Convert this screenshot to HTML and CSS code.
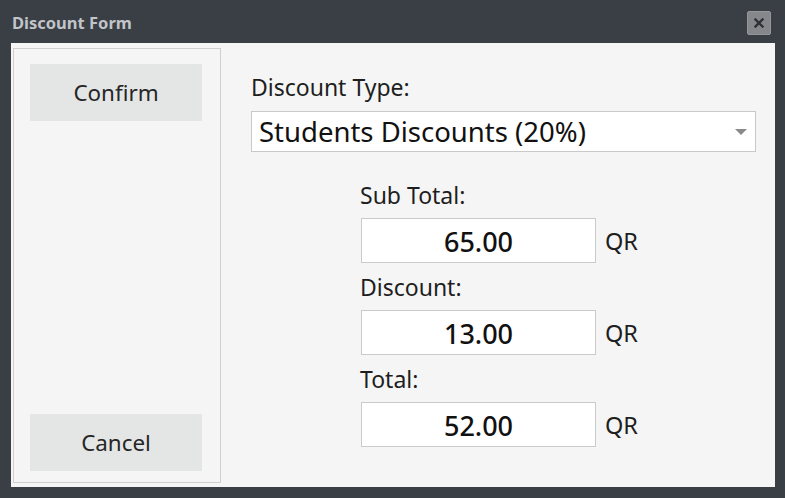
FILE: index.html
```html
<!DOCTYPE html>
<html>
<head>
<meta charset="utf-8">
<link rel="stylesheet" href="styles.css">
</head>
<body>
<div class="window">
  <div class="titlebar">
    <span class="title">Discount Form</span>
    <button class="close" aria-label="Close">
      <svg width="10" height="10" viewBox="0 0 10 10"><path d="M1.5 1.5 L8.5 8.5 M8.5 1.5 L1.5 8.5" stroke="#2f3136" stroke-width="2.4" stroke-linecap="square"/></svg>
    </button>
  </div>
  <div class="content">
    <div class="side">
      <button class="btn">Confirm</button>
      <button class="btn">Cancel</button>
    </div>
    <div class="form">
      <div class="label">Discount Type:</div>
      <div class="combo">
        <span class="combo-text">Students Discounts (20%)</span>
        <svg class="arrow" width="12" height="7" viewBox="0 0 12 7"><path d="M0 0 H12 L6 6 Z" fill="#8a8a8a"/></svg>
      </div>
      <div class="fields">
        <div class="field first">
          <div class="label">Sub Total:</div>
          <div class="row"><div class="box">65.00</div><span class="unit">QR</span></div>
        </div>
        <div class="field">
          <div class="label">Discount:</div>
          <div class="row"><div class="box">13.00</div><span class="unit">QR</span></div>
        </div>
        <div class="field">
          <div class="label">Total:</div>
          <div class="row"><div class="box">52.00</div><span class="unit">QR</span></div>
        </div>
      </div>
    </div>
  </div>
</div>
</body>
</html>
```
FILE: styles.css
```css
* { box-sizing: border-box; }
html, body { margin: 0; padding: 0; }
body {
  width: 785px;
  height: 498px;
  background: #3a3e45;
  font-family: "Noto Sans", "Open Sans", sans-serif;
  color: #1e1e1e;
  overflow: hidden;
}
.window {
  display: flex;
  flex-direction: column;
  height: 498px;
}
.titlebar {
  height: 43px;
  display: flex;
  align-items: center;
  justify-content: space-between;
  padding: 0 14px 0 12px;
}
.title {
  font-weight: bold;
  font-size: 16.5px;
  color: #c1c4c9;
  margin-top: 1px;
}
.close {
  width: 24px;
  height: 24px;
  margin-top: 3px;
  padding: 0;
  border: 1px solid #95979a;
  border-radius: 2px;
  background: #85878a;
  display: flex;
  align-items: center;
  justify-content: center;
}
.content {
  margin: 0 10px 11px 11px;
  height: 444px;
  background: #f5f5f5;
  display: flex;
  padding: 5px 0 4px 2px;
}
.side {
  width: 208px;
  border: 1px solid #cfcfcf;
  display: flex;
  flex-direction: column;
  justify-content: space-between;
  align-items: flex-start;
  padding: 15px 0 11px 16px;
}
.btn {
  width: 172px;
  height: 57px;
  border: none;
  background: #e4e5e5;
  font-family: inherit;
  font-size: 22.4px;
  line-height: 57px;
  color: #262626;
  padding: 0;
}
.form {
  flex: 1;
  padding: 25px 19px 0 30px;
}
.label {
  font-size: 23px;
  line-height: 28px;
  height: 28px;
  color: #1e1e1e;
  white-space: nowrap;
}
.combo {
  margin-top: 10px;
  height: 41px;
  background: #fff;
  border: 1px solid #c9c9c9;
  display: flex;
  align-items: center;
  justify-content: space-between;
  padding: 0 8px 0 7px;
}
.combo-text {
  font-size: 27.5px;
  line-height: 39px;
  color: #111;
}
.arrow { margin-top: 2px; }
.fields {
  padding-left: 109px;
}
.field { margin-top: 10px; }
.field.first { margin-top: 29px; }
.row {
  margin-top: 9px;
  display: flex;
  align-items: center;
}
.box {
  width: 235px;
  height: 45px;
  background: #fff;
  border: 1px solid #cacaca;
  margin-left: 1px;
  display: flex;
  align-items: center;
  justify-content: center;
  font-size: 27px;
  line-height: 43px;
  font-weight: 500;
  color: #111;
  padding-top: 2px;
}
.unit {
  margin-left: 9px;
  font-size: 23.5px;
  color: #1e1e1e;
}
```
